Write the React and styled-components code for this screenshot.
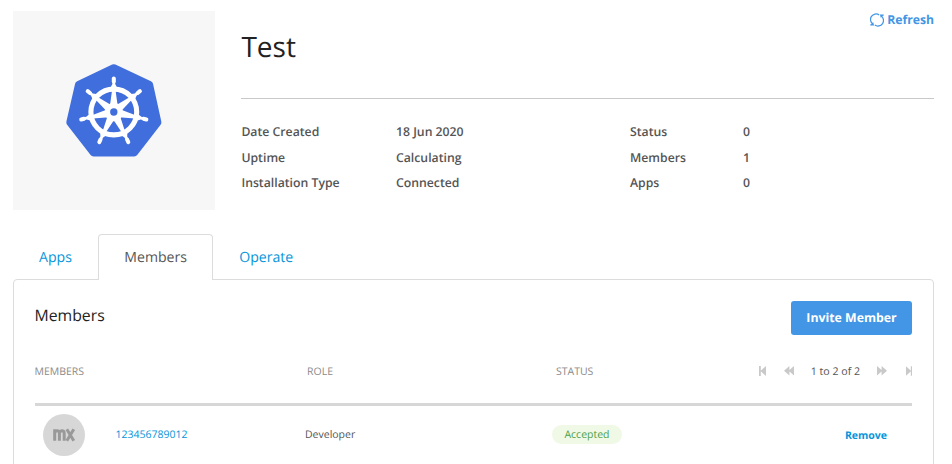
import React from "react";
import styled, { createGlobalStyle } from "styled-components";

const GlobalStyle = createGlobalStyle`
  * { box-sizing: border-box; }
  body {
    margin: 0;
    background: #fff;
    color: #555;
    font-family: "Open Sans", "Noto Sans", sans-serif;
    text-rendering: geometricPrecision;
    overflow: hidden;
  }
  button { text-rendering: inherit; }
`;

const Page = styled.main`
  width: 952px;
  height: 464px;
  padding: 11px 18px 0 13px;
  overflow: hidden;
`;

const Summary = styled.header`
  display: grid;
  grid-template-columns: 202px 1fr;
  column-gap: 26.4px;
  height: 199px;
`;

const LogoTile = styled.div`
  display: flex;
  align-items: center;
  justify-content: center;
  background: #f7f7f7;
`;

const TitleBar = styled.div`
  display: flex;
  justify-content: space-between;
  align-items: flex-start;
  height: 88px;
  border-bottom: 1px solid #c8c8c8;
`;

const Title = styled.h1`
  margin: 15px 0 0;
  font-size: 28px;
  line-height: 42px;
  font-weight: 400;
  color: #222;
`;

const RefreshButton = styled.button`
  display: flex;
  align-items: center;
  gap: 3.5px;
  height: 18px;
  padding: 0;
  border: 0;
  background: none;
  color: #4296e5;
  font: 700 12.2px/18px "Open Sans", sans-serif;
`;

const Facts = styled.dl`
  display: grid;
  grid-template-columns: 154.6px 234px 113px 1fr;
  grid-auto-rows: 25.5px;
  align-items: center;
  margin: 19.8px 0 0;
  font-size: 12.25px;
  font-weight: 600;
  white-space: nowrap;
`;

const Term = styled.dt``;

const Value = styled.dd`
  margin: 0;
`;

const Tabs = styled.nav`
  display: flex;
  height: 45px;
  margin-top: 24px;
  position: relative;
  z-index: 1;
`;

const Tab = styled.button`
  width: ${(p) => p.$width}px;
  height: 46px;
  padding: 0;
  border: 1px solid ${(p) => (p.$active ? "#dcdcdc" : "transparent")};
  border-bottom: 0;
  border-radius: 4px 4px 0 0;
  background: ${(p) => (p.$active ? "#fff" : "transparent")};
  color: ${(p) => (p.$active ? "#555" : "#0595db")};
  font: 400 14.1px/44px "Open Sans", sans-serif;
`;

const Panel = styled.section`
  height: 200px;
  padding: 21px 21px 0 20.5px;
  border: 1px solid #dcdcdc;
  border-radius: 4px 4px 0 0;
`;

const PanelHeader = styled.div`
  display: flex;
  justify-content: space-between;
  align-items: flex-start;
  height: 56px;
`;

const PanelTitle = styled.h2`
  margin: 3px 0 0;
  font-size: 15.8px;
  line-height: 22px;
  font-weight: 400;
  color: #222;
`;

const InviteButton = styled.button`
  width: 121px;
  height: 33.5px;
  padding: 0;
  border: 0;
  border-radius: 3px;
  background: #4296e5;
  color: #fff;
  font: 700 12.3px/33px "Open Sans", sans-serif;
`;

const Row = styled.div`
  display: grid;
  grid-template-columns: 272.5px 249px 1fr auto;
  align-items: center;
  white-space: nowrap;
`;

const HeadRow = styled(Row)`
  height: 46px;
  padding-bottom: 17px;
  color: #8a8a8a;
  font-size: 10.5px;
`;

const Rule = styled.div`
  height: 3px;
  background: #d7d7d7;
`;

const BodyRow = styled(Row)`
  grid-template-columns: 81px 189.5px 247px 1fr auto;
  height: 58px;
  font-size: 10.5px;
`;

const Pager = styled.div`
  display: flex;
  align-items: center;
  color: #555;
  font-size: 10.6px;
`;

const PagerIcon = styled.svg`
  display: block;
  width: ${(p) => p.$width}px;
  height: 10px;
  margin: -2px ${(p) => p.$gap || 0}px 0 0;
  fill: #c9c9c9;
`;

const PagerText = styled.span`
  margin-right: 16.5px;
`;

const Avatar = styled.div`
  display: flex;
  align-items: center;
  justify-content: center;
  width: 42px;
  height: 42px;
  margin-left: 8.5px;
  border-radius: 50%;
  background: #d7d7d7;
`;

const MemberLink = styled.a`
  color: #0595db;
`;

const Badge = styled.span`
  display: block;
  width: 70px;
  height: 19px;
  margin-top: -1px;
  border-radius: 9.5px;
  background: #f0f9e6;
  color: #4e9f46;
  line-height: 20px;
  text-align: center;
`;

const RemoveButton = styled.button`
  margin-right: 25px;
  padding: 1px 0 0;
  border: 0;
  background: none;
  color: #0595db;
  font: 700 10.5px/16px "Open Sans", sans-serif;
`;

const SPOKES = [0, 1, 2, 3, 4, 5, 6].map((i) => (i * 360) / 7);

const HelmLogo = () => (
  <svg width="106" height="101" viewBox="61 60 106 101" aria-hidden="true">
    <path
      d="M113.8 68 L149.3 84.6 L157.6 122.4 L134.2 152.7 H93.6 L70.1 122.4 L78.8 84.6 Z"
      fill="#406edd"
      stroke="#406edd"
      strokeWidth="7.6"
      strokeLinejoin="round"
    />
    <circle cx="113.8" cy="112" r="22.9" fill="none" stroke="#fff" strokeWidth="5.1" />
    {SPOKES.map((a) => (
      <g key={a} transform={`translate(113.8 112) rotate(${a})`}>
        <path d="M-3.9 -6 L-1.7 -22 L-3 -25 L-1.4 -28 V-33 H1.4 V-28 L3 -25 L1.7 -22 L3.9 -6 Z" fill="#fff" />
        <path d="M0 -30.5 V-33.4" stroke="#fff" strokeWidth="4" strokeLinecap="round" />
      </g>
    ))}
    <circle cx="113.8" cy="112" r="9.2" fill="#fff" />
    <circle cx="113.8" cy="112" r="3.7" fill="#406edd" />
  </svg>
);

const RefreshIcon = () => (
  <svg width="14" height="14" viewBox="0 0 14 14" aria-hidden="true">
    <g fill="none" stroke="currentColor" strokeWidth="1.25">
      <path d="M3 11.2 A5.3 5.3 0 0 1 9.2 1.9" />
      <path d="M11 2.8 A5.3 5.3 0 0 1 4.8 12.1" />
    </g>
    <path d="M9.9 1.6 H13.8 V2.6 L12.4 3 L10.9 5 Z" fill="currentColor" />
    <path d="M4.1 12.4 H0.2 V11.4 L1.6 11 L3.1 9 Z" fill="currentColor" />
  </svg>
);

const MxMark = () => (
  <svg width="24" height="14" viewBox="0 0 24 14" aria-hidden="true">
    <g fill="none" stroke="#999" strokeWidth="3">
      <path d="M2.7 12.8 V1.2 M2.7 5 Q3.4 2.7 5.2 2.7 Q7.4 2.7 7.4 5.2 V12.8 M7.4 5.2 Q8.2 2.7 9.9 2.7 Q12.2 2.7 12.2 5.2 V12.8" />
      <path d="M14.8 1.2 L21.8 12.8 M21.8 1.2 L14.8 12.8" />
    </g>
  </svg>
);

const facts = [
  ["Date Created", "18 Jun 2020", "Status", "0"],
  ["Uptime", "Calculating", "Members", "1"],
  ["Installation Type", "Connected", "Apps", "0"],
];

export default function App() {
  return (
    <>
      <GlobalStyle />
      <Page>
        <Summary>
          <LogoTile>
            <HelmLogo />
          </LogoTile>
          <div>
            <TitleBar>
              <Title>Test</Title>
              <RefreshButton>
                <RefreshIcon />
                Refresh
              </RefreshButton>
            </TitleBar>
            <Facts>
              {facts.map(([a, b, c, d]) => (
                <React.Fragment key={a}>
                  <Term>{a}</Term>
                  <Value>{b}</Value>
                  <Term>{c}</Term>
                  <Value>{d}</Value>
                </React.Fragment>
              ))}
            </Facts>
          </div>
        </Summary>
        <Tabs>
          <Tab $width={85}>Apps</Tab>
          <Tab $width={115.4} $active>Members</Tab>
          <Tab $width={105.6}>Operate</Tab>
        </Tabs>
        <Panel>
          <PanelHeader>
            <PanelTitle>Members</PanelTitle>
            <InviteButton>Invite Member</InviteButton>
          </PanelHeader>
          <HeadRow>
            <span>MEMBERS</span>
            <span>ROLE</span>
            <span>STATUS</span>
            <Pager>
              <PagerIcon $width={7} $gap={18} viewBox="0 0 7 10">
                <path d="M0 0H1.8V10H0ZM7 0V10L1.4 5Z" />
              </PagerIcon>
              <PagerIcon $width={10} $gap={16.5} viewBox="0 0 10 10">
                <path d="M5.4 0V9.4L0 4.7ZM10 0V9.4L4.6 4.7Z" />
              </PagerIcon>
              <PagerText>1 to 2 of 2</PagerText>
              <PagerIcon $width={10} $gap={19} viewBox="0 0 10 10">
                <path d="M0 0V9.4L5.4 4.7ZM4.6 0V9.4L10 4.7Z" />
              </PagerIcon>
              <PagerIcon $width={6.5} viewBox="0 0 7 10">
                <path d="M7 0H5.2V10H7ZM0 0V10L5.6 5Z" />
              </PagerIcon>
            </Pager>
          </HeadRow>
          <Rule />
          <BodyRow>
            <Avatar>
              <MxMark />
            </Avatar>
            <MemberLink>123456789012</MemberLink>
            <span>Developer</span>
            <Badge>Accepted</Badge>
            <RemoveButton>Remove</RemoveButton>
          </BodyRow>
        </Panel>
      </Page>
    </>
  );
}
